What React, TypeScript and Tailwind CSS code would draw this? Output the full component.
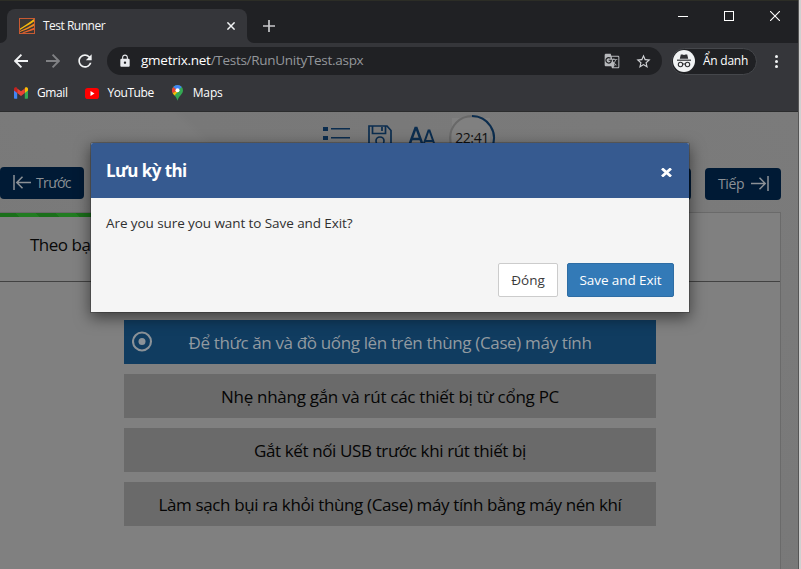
import React from "react";
import { MdGTranslate, MdLock, MdStarBorder, MdRefresh } from "react-icons/md";

const ANSWERS = [
  { text: "Để thức ăn và đồ uống lên trên thùng (Case) máy tính", style: "bg-[#103c60] text-[#929aa0] tracking-[-0.36px]", selected: true },
  { text: "Nhẹ nhàng gắn và rút các thiết bị từ cổng PC", style: "bg-[#6a6a6a] text-[#050505] tracking-[-0.283px]", selected: false },
  { text: "Gắt kết nối USB trước khi rút thiết bị", style: "bg-[#6a6a6a] text-[#050505] tracking-[-0.377px]", selected: false },
  { text: "Làm sạch bụi ra khỏi thùng (Case) máy tính bằng máy nén khí", style: "bg-[#6a6a6a] text-[#050505] tracking-[-0.375px]", selected: false },
];

function BackArrow() {
  return (
    <svg width="14" height="14" viewBox="0 0 14 14" fill="none" stroke="#f1f3f4" strokeWidth="1.9">
      <path d="M14 7H1.4M7.4 .7 1.2 7l6.2 6.3" />
    </svg>
  );
}

function ForwardArrow() {
  return (
    <svg width="14" height="14" viewBox="0 0 14 14" fill="none" stroke="#808184" strokeWidth="1.9">
      <path d="M0 7h12.6M6.6 .7 12.8 7l-6.2 6.3" />
    </svg>
  );
}

function TabBar() {
  return (
    <div className="flex h-[43px] items-end border-t border-[#2c2d26] bg-[#202124]">
      <div className="h-[7px] w-[7px] overflow-hidden bg-[#35363a]">
        <div className="h-full w-full rounded-br-[7px] bg-[#202124]" />
      </div>
      <div className="flex h-[34px] w-[240px] items-center rounded-t-lg bg-[#35363a] pl-3">
        <svg width="16" height="16" viewBox="0 0 16 16" fill="none">
          <rect x=".5" y=".5" width="15" height="15" fill="#3b3734" stroke="#c85a32" />
          <path d="M1 10.500C5 8 10 5 15 1v2.600C10 7 5 9.500 1 12z" fill="#f5b80c" />
          <path d="M1 13C6 11 11 8 15 5.500V8C10 10.500 5 12.500 1 14z" fill="#f08a1c" />
          <path d="M3 14.500C8 13 12 11 15 9.700v2C11 13 8 14 5 15z" fill="#e8642c" />
        </svg>
        <span className="ml-2 whitespace-nowrap text-[12px] tracking-[-0.5px] text-[#f5f6f7]">Test Runner</span>
        <svg className="ml-auto mr-[12px]" width="8" height="8" viewBox="0 0 8 8" stroke="#f1f3f4" strokeWidth="1.5">
          <path d="m.4.4 7.200 7.200M7.600.4.4 7.600" />
        </svg>
      </div>
      <div className="h-[7px] w-[7px] overflow-hidden bg-[#35363a]">
        <div className="h-full w-full rounded-bl-[7px] bg-[#202124]" />
      </div>
      <svg className="mb-[11px] ml-[9px]" width="12" height="12" viewBox="0 0 12 12" stroke="#c7c8ca" strokeWidth="1.7">
        <path d="M6 0v12M0 6h12" />
      </svg>
      <div className="mb-[22px] ml-auto mr-[18px] flex items-center">
        <div className="h-px w-[10px] bg-white" />
        <div className="ml-[36px] h-[10px] w-[10px] border border-white" />
        <svg className="ml-[36px]" width="10" height="10" viewBox="0 0 10 10" stroke="#fff" strokeWidth="1.100">
          <path d="m0 0 10 10M10 0 0 10" />
        </svg>
      </div>
    </div>
  );
}

function AddressRow() {
  return (
    <div className="flex h-9 items-center bg-[#35363a] pl-[14px]">
      <BackArrow />
      <div className="ml-[18px]"><ForwardArrow /></div>
      <MdRefresh className="ml-[15px] size-[20px] text-[#f1f3f4]" />
      <div className="ml-[12px] flex h-7 w-[555px] items-center rounded-full bg-[#202124] pl-[11px] pr-[10px]">
        <MdLock className="size-[14px] text-[#e8eaed]" />
        <span className="ml-[9px] whitespace-nowrap pb-px text-[13.500px] tracking-[-0.25px] text-white">gmetrix.net</span>
        <span className="whitespace-nowrap pb-px text-[13.500px] tracking-[-0.29px] text-[#94979b]">/Tests/RunUnityTest.aspx</span>
        <MdGTranslate className="ml-auto size-[16px] text-[#b7b9bc]" />
        <MdStarBorder className="ml-[15px] size-[17px] text-[#d0d2d5]" />
      </div>
      <div className="ml-[9px] flex h-[27px] w-[86px] items-center rounded-full border border-[#45474b] bg-[#202124] pl-px">
        <svg width="22" height="22" viewBox="0 0 22 22" fill="none">
          <circle cx="11" cy="11" r="11" fill="#f1f3f4" />
          <path d="M7.800 4.500h1.700l1.500.6 1.500-.6h1.700l1 4.200H6.800z" fill="#303134" />
          <path d="M4 10.200h14" stroke="#303134" strokeWidth="1.200" />
          <circle cx="7.500" cy="14.500" r="2.200" stroke="#303134" strokeWidth="1.100" />
          <circle cx="14.500" cy="14.500" r="2.200" stroke="#303134" strokeWidth="1.100" />
          <path d="M9.700 14h2.600" stroke="#303134" />
        </svg>
        <span className="ml-2 whitespace-nowrap text-[12px] tracking-[-0.25px] text-white">Ẩn danh</span>
      </div>
      <div className="ml-[18px] flex flex-col gap-[2px]">
        <div className="size-[3px] rounded-full bg-[#f1f3f4]" />
        <div className="size-[3px] rounded-full bg-[#f1f3f4]" />
        <div className="size-[3px] rounded-full bg-[#f1f3f4]" />
      </div>
    </div>
  );
}

function Bookmarks() {
  return (
    <div className="flex h-[33px] items-center border-b border-[#2b2c2d] bg-[#35363a] pb-[5px] pl-[14px] pt-px text-[12px] text-white">
      <svg width="14" height="12" viewBox="0 0 14 12">
        <path d="M0 2.200v8.600c0 .6.400 1 1 1h2.200V5z" fill="#4285f4" />
        <path d="M14 2.200v8.600c0 .6-.4 1-1 1h-2.200V5z" fill="#34a853" />
        <path d="M10.800 1.500V6L14 3.600V2C14 .5 12.200-.3 11 .8z" fill="#fbbc04" />
        <path d="M3.200 6V1.400L7 4.300l3.800-2.900V6L7 8.900z" fill="#ea4335" />
        <path d="M0 2v1.600L3.200 6V1L3 .8C1.800-.3 0 .5 0 2z" fill="#c5221f" />
      </svg>
      <span className="ml-[9px] tracking-[-0.4px]">Gmail</span>
      <svg className="ml-[17px]" width="14" height="11" viewBox="0 0 14 11">
        <rect width="14" height="11" rx="2.800" fill="#f00" />
        <path d="m5.500 3 4 2.500-4 2.500z" fill="#fff" />
      </svg>
      <span className="ml-[9px] tracking-[-0.46px]">YouTube</span>
      <svg className="ml-[18px]" width="11" height="16" viewBox="0 0 11 16">
        <path d="M5.500 0A5.500 5.500 0 0 0 0 5.500c0 4 4.300 5 5.500 10.300C6.700 10.500 11 9.500 11 5.500A5.500 5.500 0 0 0 5.500 0z" fill="#34a853" />
        <path d="M1.300 2A5.500 5.500 0 0 1 9.700 2L5.500 6z" fill="#4285f4" />
        <path d="M1.300 2A5.500 5.500 0 0 0 .7 8.200L5.500 5.500z" fill="#ea4335" />
        <path d="M.7 8.200 2.500 10.600 7.700 4.500l-2.200 1z" fill="#fbbc04" />
        <circle cx="5.500" cy="5.300" r="2" fill="#fff" />
      </svg>
      <span className="ml-[10px] tracking-[-0.13px]">Maps</span>
    </div>
  );
}

function TestTools() {
  return (
    <div className="flex h-[55px] items-start pl-[323px]">
      <svg className="mt-[14px]" width="27" height="24" viewBox="0 0 27 24" fill="#0b2d4f">
        <path d="M0 1h5v4H0zM8 2h19v1.500H8zM0 10h5v4H0zM8 11h19v1.500H8zM0 19h5v4H0zM8 20h19v1.500H8z" />
      </svg>
      <svg className="ml-[18px] mt-[13px]" width="24" height="25" viewBox="0 0 24 25" fill="none" stroke="#0b2d4f" strokeWidth="1.700">
        <path d="M1 1h18l4 4.500V24H1zM4.500 1v7.500h13V1M14 2v4" />
        <circle cx="12" cy="16" r="4" />
      </svg>
      <svg className="ml-[16px] mt-[14px]" width="28" height="22" viewBox="0 0 28 22" fill="none" stroke="#0b2d4f">
        <path d="M1 20 7.500 2h1L15 20M4 13h8" strokeWidth="2.500" />
        <path d="m15 20 5.500-15.500h1L27 20M17.500 15h7" strokeWidth="2" />
      </svg>
      <div className="relative ml-[12px] mt-[2px] flex size-[48px] items-center justify-center">
        <svg className="absolute inset-0" width="48" height="48" viewBox="0 0 48 48" fill="none" strokeWidth="2">
          <path d="M4 4h38v40H4z" fill="#808080" />
          <circle cx="24" cy="24" r="22" stroke="#686868" />
          <path d="M24 2a22 22 0 0 1 20 31" stroke="#0b2d4f" />
        </svg>
        <span className="relative pb-[2px] text-[14px] tracking-[-0.4px] text-[#111]">22:41</span>
      </div>
    </div>
  );
}

function Navigation() {
  return (
    <div className="flex h-[45px] items-start text-[14px] text-[#8c9196]">
      <div className="flex h-8 w-[84px] items-center rounded bg-[#001a35] pb-[2px] pl-[13px]">
        <svg width="18" height="15" viewBox="0 0 18 15" fill="none" stroke="currentColor" strokeWidth="1.500">
          <path d="M1 0v15M18 7.500H4M9.500 1.800 3.800 7.500l5.700 5.700" />
        </svg>
        <span className="ml-[5px] tracking-[-0.6px]">Trước</span>
      </div>
      <div className="ml-auto mt-px h-8 w-[76px] rounded bg-[#001a35]" />
      <div className="ml-[14px] mr-[17px] mt-px flex h-8 w-[76px] items-center rounded bg-[#001a35] pb-[2px] pl-[13px]">
        <span className="tracking-[-0.41px]">Tiếp</span>
        <svg className="ml-[7px]" width="18" height="15" viewBox="0 0 18 15" fill="none" stroke="currentColor" strokeWidth="1.500">
          <path d="M17 0v15M0 7.500h14M8.500 1.800l5.700 5.700-5.700 5.700" />
        </svg>
      </div>
    </div>
  );
}

function Question() {
  return (
    <div className="h-[357px] w-[781px] border-r border-t border-[#6a6a6a] bg-[#808080] text-[17px]">
      <div className="h-[4px] w-[400px] bg-[repeating-linear-gradient(45deg,#1a6f1a_0px,#1a6f1a_14px,#217c21_14px,#217c21_28px)]" />
      <div className="flex h-[65px] items-center border-b border-[#424242] pb-[8px] pl-[30px] text-[#080808]">
        <span className="tracking-[-0.5px]">Theo bạn</span>
      </div>
      <div className="ml-[124px] mt-[38px] flex w-[532px] flex-col gap-[10px]">
        {ANSWERS.map((a) => (
          <div key={a.text} className={`relative flex h-11 items-center justify-center whitespace-nowrap pt-px ${a.style}`}>
            {a.selected && (
              <svg className="absolute left-[8px] top-[11px]" width="21" height="21" viewBox="0 0 21 21" fill="none">
                <circle cx="10" cy="10.500" r="9" stroke="#8b9298" strokeWidth="2.100" />
                <circle cx="10" cy="10.500" r="3.500" fill="#8b9298" />
              </svg>
            )}
            {a.text}
          </div>
        ))}
      </div>
    </div>
  );
}

function SaveDialog() {
  return (
    <div className="absolute left-[90px] top-[142px] flex h-[171px] w-[600px] flex-col rounded-t-[3px] border border-black/20 bg-[#f5f5f5] bg-clip-padding shadow-[0_5px_15px_rgba(0,0,0,0.5)]">
      <div className="flex h-[55px] items-center justify-between rounded-t-[2px] bg-[#365a90] pl-[15px] pr-[17px] text-white">
        <span className="text-[17px] font-bold tracking-[-0.58px]">Lưu kỳ thi</span>
        <svg className="mt-[4px]" width="11" height="9" viewBox="0 0 11 9" stroke="#fff" strokeWidth="2.800">
          <path d="m1 .5 9 8M10 .5l-9 8" />
        </svg>
      </div>
      <p className="h-[65px] whitespace-nowrap pl-[15px] pt-[15px] text-[13.500px] leading-5 tracking-[-0.08px] text-[#303030]">Are you sure you want to Save and Exit?</p>
      <div className="flex justify-end gap-[9px] pr-[15px] text-[13.500px]">
        <button className="h-[34px] w-[60px] rounded-[2px] border border-[#ccc] bg-white text-[#3b3b3b]">Đóng</button>
        <button className="h-[34px] w-[107px] whitespace-nowrap rounded-[2px] border border-[#2e6da4] bg-[#337ab7] tracking-[-0.08px] text-white">Save and Exit</button>
      </div>
    </div>
  );
}

export default function App() {
  return (
    <div className="relative flex h-[569px] w-[801px] overflow-hidden bg-[#d0d0d0] font-['Open_Sans','Noto_Sans',sans-serif]">
      <div className="flex w-[799px] shrink-0 flex-col border-r border-[#555]">
        <TabBar />
        <AddressRow />
        <Bookmarks />
        <div className="flex-1 bg-[#797979] bg-[linear-gradient(45deg,#777_0%,#7b7b7b_50%,#787878_51%,#7b7b7b_100%)]">
          <TestTools />
          <Navigation />
          <Question />
        </div>
      </div>
      <SaveDialog />
    </div>
  );
}
